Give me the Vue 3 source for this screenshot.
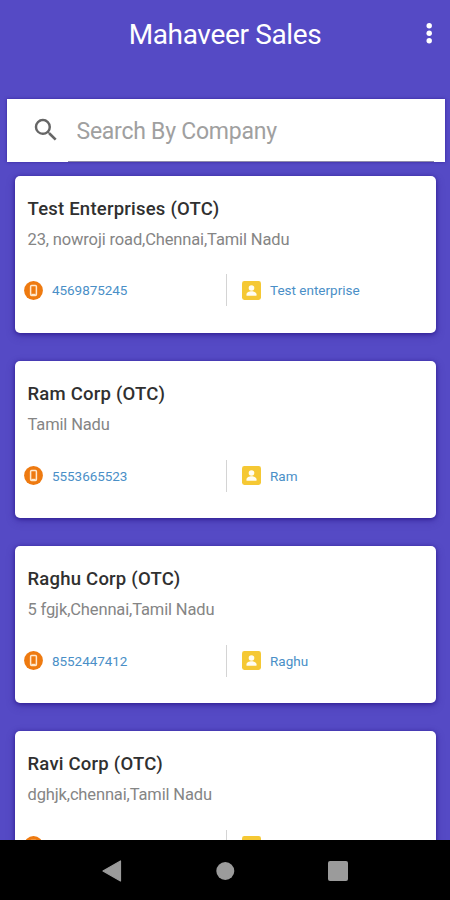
<template>
  <div class="screen">
    <header class="app-bar">
      <h1 class="app-title">Mahaveer Sales</h1>
      <button class="menu-button" aria-label="Menu">
        <svg width="8" height="22" viewBox="0 0 8 22">
          <circle cx="4.2" cy="3.7" r="2.7" />
          <circle cx="4.2" cy="11.2" r="2.7" />
          <circle cx="4.2" cy="18.7" r="2.7" />
        </svg>
      </button>
    </header>

    <div class="search-bar">
      <svg class="search-icon" width="30" height="30" viewBox="0 0 24 24">
        <path d="M15.5 14h-.79l-.28-.27A6.471 6.471 0 0 0 16 9.5 6.5 6.5 0 1 0 9.5 16c1.61 0 3.09-.59 4.23-1.57l.27.28v.79l5 4.99L20.49 19l-4.99-5zm-6 0C7.01 14 5 11.99 5 9.5S7.01 5 9.5 5 14 7.01 14 9.5 11.99 14 9.5 14z" />
      </svg>
      <div class="search-field">
        <input v-model="query" class="search-input" type="text" placeholder="Search By Company" />
      </div>
    </div>

    <main class="company-list">
      <article v-for="company in filteredCompanies" :key="company.name" class="card">
        <h2 class="company-name">{{ company.name }}</h2>
        <p class="company-address">{{ company.address }}</p>
        <div class="contact-row">
          <div class="contact phone">
            <svg width="19" height="19" viewBox="0 0 19 19">
              <circle cx="9.5" cy="9.5" r="9.4" fill="#ee7a10" />
              <rect x="6.6" y="4.4" width="5.8" height="10" rx="1" fill="none" stroke="#ffe9cf" stroke-width="1.5" />
              <path d="M7.4 13.4h4.2" stroke="#ffe9cf" stroke-width="1.2" />
            </svg>
            <span class="phone-text">{{ company.phone }}</span>
          </div>
          <div class="contact person">
            <svg width="19" height="19" viewBox="0 0 19 19">
              <rect width="19" height="19" rx="2.4" fill="#f5c834" />
              <circle cx="9.5" cy="7" r="2.8" fill="#fffdf2" />
              <path d="M4.5 14.8v-1.6c0-1.9 2.8-2.9 5-2.9s5 1 5 2.9v1.6z" fill="#fffdf2" />
            </svg>
            <span>{{ company.contact }}</span>
          </div>
        </div>
      </article>
    </main>

    <nav class="nav-bar">
      <svg width="20" height="22" viewBox="0 0 20 22">
        <path d="M1 11 18.5 1v20z" stroke-width="1.2" stroke-linejoin="round" />
      </svg>
      <svg width="20" height="20" viewBox="0 0 20 20">
        <circle cx="10.3" cy="10" r="9" stroke="none" />
      </svg>
      <svg width="20" height="20" viewBox="0 0 20 20">
        <rect width="20" height="20" rx="2" stroke="none" />
      </svg>
    </nav>
  </div>
</template>

<script setup>
import { ref, computed } from 'vue'

const query = ref('')

const companies = ref([
  {
    name: 'Test Enterprises (OTC)',
    address: '23, nowroji road,Chennai,Tamil Nadu',
    phone: '4569875245',
    contact: 'Test enterprise'
  },
  {
    name: 'Ram Corp (OTC)',
    address: 'Tamil Nadu',
    phone: '5553665523',
    contact: 'Ram'
  },
  {
    name: 'Raghu Corp (OTC)',
    address: '5 fgjk,Chennai,Tamil Nadu',
    phone: '8552447412',
    contact: 'Raghu'
  },
  {
    name: 'Ravi Corp (OTC)',
    address: 'dghjk,chennai,Tamil Nadu',
    phone: '',
    contact: ''
  }
])

const filteredCompanies = computed(() =>
  companies.value.filter((c) => c.name.toLowerCase().includes(query.value.toLowerCase()))
)
</script>

<style>
body {
  margin: 0;
}
</style>

<style scoped>
.screen {
  height: 900px;
  display: flex;
  flex-direction: column;
  overflow: hidden;
  background: #554ac5;
  font-family: Roboto, "Liberation Sans", sans-serif;
}

.app-bar {
  height: 99px;
  flex-shrink: 0;
  display: grid;
  grid-template-columns: 42px 1fr 42px;
  align-items: start;
}

.app-title {
  grid-column: 2;
  margin: 18px 0 0;
  font-size: 28px;
  line-height: 33px;
  font-weight: 400;
  letter-spacing: -0.35px;
  text-align: center;
  color: #fff;
}

.menu-button {
  margin-top: 22px;
  padding: 0;
  height: 22px;
  border: none;
  background: none;
  fill: #fff;
}

.menu-button svg {
  display: block;
  margin: 0 auto;
}

.search-bar {
  height: 63px;
  flex-shrink: 0;
  margin: 0 5.5px 0 6.5px;
  display: flex;
  background: #fff;
  box-shadow: 0 0 3px rgba(40, 20, 140, 0.7);
}

.search-icon {
  margin: 16px 6.5px 0 24.5px;
  flex-shrink: 0;
  fill: #666;
}

.search-field {
  flex: 1;
  margin-right: 11px;
  display: flex;
  border-bottom: 1px solid #8e8aa8;
}

.search-input {
  flex: 1;
  min-width: 0;
  padding: 3px 0 0 9px;
  border: none;
  outline: none;
  background: transparent;
  font-family: inherit;
  font-size: 23px;
  letter-spacing: -0.25px;
  color: #333;
}

.search-input::placeholder {
  color: #a0a0a0;
  opacity: 1;
}

.company-list {
  flex: 1;
  min-height: 0;
  overflow: hidden;
  padding: 14.2px 14px 0 14.5px;
}

.card {
  box-sizing: border-box;
  height: 156.8px;
  margin-bottom: 28.3px;
  padding: 20.5px 9px 0;
  background: #fff;
  border-radius: 5px;
  box-shadow: 0 1px 4px rgba(35, 15, 130, 0.75), 0 3px 10px rgba(45, 30, 140, 0.3);
}

.company-name {
  margin: 0 4px;
  font-size: 18.5px;
  line-height: 24px;
  font-weight: 500;
  letter-spacing: 0.22px;
  color: #303030;
}

.company-address {
  margin: 8px 4px 0;
  font-size: 16.5px;
  line-height: 22px;
  letter-spacing: -0.14px;
  color: #858585;
}

.contact-row {
  display: flex;
  margin-top: 23.8px;
  height: 32px;
}

.contact {
  display: flex;
  align-items: center;
  gap: 9.5px;
  font-size: 13.5px;
  color: #4a8fc7;
}

.phone {
  box-sizing: border-box;
  width: 203px;
  border-right: 1px solid #d4d4d4;
}

.phone-text {
  letter-spacing: -0.05px;
}

.person {
  padding-left: 15px;
}

.nav-bar {
  box-sizing: border-box;
  height: 60px;
  padding-top: 1px;
  flex-shrink: 0;
  display: flex;
  justify-content: center;
  align-items: center;
  gap: 93px;
  background: #000;
  fill: #9b9b9b;
  stroke: #9b9b9b;
}
</style>
